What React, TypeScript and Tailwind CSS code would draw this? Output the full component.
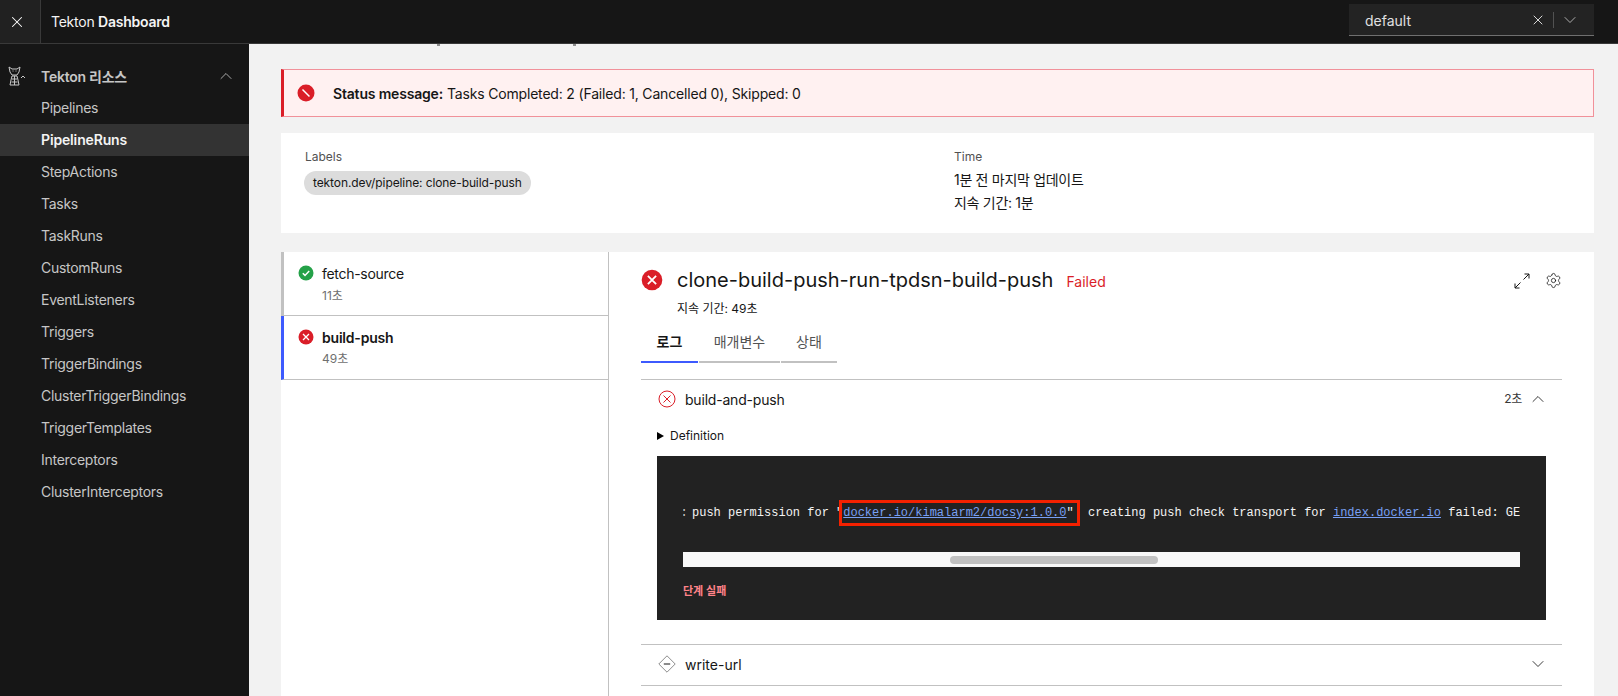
import React from 'react';
import { ChevronUp, ChevronDown, X, Settings } from 'lucide-react';

const sans = { fontFamily: '"Inter", "Noto Sans CJK KR", sans-serif' };

const navItems = [
  'Pipelines',
  'PipelineRuns',
  'StepActions',
  'Tasks',
  'TaskRuns',
  'CustomRuns',
  'EventListeners',
  'Triggers',
  'TriggerBindings',
  'ClusterTriggerBindings',
  'TriggerTemplates',
  'Interceptors',
  'ClusterInterceptors',
];

const FilledX = ({ size }: { size: number }) => (
  <svg width={size} height={size} viewBox="0 0 16 16" className="shrink-0">
    <circle cx="8" cy="8" r="7.5" fill="#da1e28" />
    <path d="M5 5l6 6M11 5l-6 6" stroke="#fff" strokeWidth="1.3" fill="none" />
  </svg>
);

const FilledCheck = () => (
  <svg width="16" height="16" viewBox="0 0 16 16" className="shrink-0">
    <circle cx="8" cy="8" r="7.5" fill="#24a148" />
    <path d="M4.8 8.2l2.2 2.2 4.2-4.4" stroke="#fff" strokeWidth="1.5" fill="none" />
  </svg>
);

const OutlineX = () => (
  <svg width="18" height="18" viewBox="0 0 18 18" className="shrink-0">
    <circle cx="9" cy="9" r="8" fill="none" stroke="#da1e28" strokeWidth="1" />
    <path d="M5.5 5.5l7 7M12.5 5.5l-7 7" stroke="#da1e28" strokeWidth="1" fill="none" />
  </svg>
);

const SkippedDiamond = () => (
  <svg width="18" height="18" viewBox="0 0 18 18" className="shrink-0">
    <path d="M9 .8L17.2 9 9 17.2.8 9z" fill="none" stroke="#8d8d8d" strokeWidth="1" />
    <path d="M5.8 9h6.4" stroke="#6f6f6f" strokeWidth="1.6" fill="none" />
  </svg>
);

const TektonLogo = () => (
  <svg width="18" height="20" viewBox="0 0 18 20" className="shrink-0" fill="none" stroke="#c6c6c6" strokeWidth="1">
    <path d="M1 1l3 2h5l3-2-1 5-2 3H4L2 6z" />
    <path d="M4.5 5h1M7.5 5h1" />
    <path d="M4 10h5l1 4 1 5H2l1-5z" />
    <path d="M4 13h5M3.5 16h6M6.5 10v9" />
    <path d="M13 12l2-2 2 2" />
  </svg>
);

const Sidebar = () => (
  <aside className="w-[249px] shrink-0 bg-[#161616] pt-[16px]">
    <div className="flex h-[32px] items-center">
      <div className="flex w-[41px] justify-start pl-[8px]">
        <TektonLogo />
      </div>
      <span className="flex-1 text-[14px] font-semibold tracking-[-0.25px] text-[#c6c6c6]">Tekton 리소스</span>
      <ChevronUp size={20} strokeWidth={1} className="mr-[13px] text-[#c6c6c6]" />
    </div>
    {navItems.map((item) => (
      <div
        key={item}
        className={
          item === 'PipelineRuns'
            ? 'flex h-[32px] items-center bg-[#333333] pb-px pl-[41px] text-[14px] font-semibold tracking-[-0.15px] text-[#f4f4f4]'
            : 'flex h-[32px] items-center pb-px pl-[41px] text-[14px] tracking-[-0.28px] text-[#c6c6c6]'
        }
      >
        {item}
      </div>
    ))}
  </aside>
);

const Header = () => (
  <header className="flex h-[44px] shrink-0 items-stretch border-b border-[#393939] bg-[#161616]">
    <div className="flex w-[41px] items-center justify-center border-r border-[#393939] bg-[#212121] pr-[7px] text-white">
      <X size={18} strokeWidth={1.4} />
    </div>
    <div className="flex flex-1 items-center pb-px pl-[10px] text-[14px] tracking-[-0.25px] text-[#f4f4f4]">
      Tekton&nbsp;<span className="font-semibold">Dashboard</span>
    </div>
    <div className="mr-[24px] mt-[4px] flex h-[32px] w-[245px] items-center border-b border-[#6f6f6f] bg-[#232323] text-[#e0e0e0]">
      <span className="flex-1 pl-[16px] pt-px text-[14px]">default</span>
      <X size={16} strokeWidth={1.3} className="mr-[7px] text-[#f4f4f4]" />
      <div className="h-[16px] w-px bg-[#525252]" />
      <ChevronDown size={20} strokeWidth={1} className="ml-[6px] mr-[14px] text-[#c6c6c6]" />
    </div>
  </header>
);

const StatusBanner = () => (
  <div className="flex h-[48px] items-center border border-l-[3px] border-[#f1919a] border-l-[#da1e28] bg-[#fff1f1] pl-[13px] text-[14px] tracking-[-0.18px] text-[#161616]">
    <svg width="18" height="18" viewBox="0 0 18 18" className="shrink-0">
      <circle cx="9" cy="9" r="8.5" fill="#da1e28" />
      <path d="M5.5 5.5l7 7" stroke="#fff" strokeWidth="1.5" fill="none" />
    </svg>
    <span className="ml-[18px] font-semibold">Status message:</span>
    <span className="ml-[4px]">Tasks Completed: 2 (Failed: 1, Cancelled 0), Skipped: 0</span>
  </div>
);

const InfoCard = () => (
  <div className="mt-[16px] flex h-[100px] bg-white pl-[24px] pt-[16px]">
    <div className="w-[649px]">
      <div className="text-[12px] leading-[16px] text-[#525252]">Labels</div>
      <div className="-ml-px mt-[6px] inline-flex h-[24px] items-center rounded-full bg-[#dcdcdc] px-[9px] text-[12px] tracking-[-0.1px] text-[#161616]">
        tekton.dev/pipeline: clone-build-push
      </div>
    </div>
    <div>
      <div className="text-[12px] leading-[16px] text-[#525252]">Time</div>
      <div className="mt-[3px] text-[14px] leading-[23px] tracking-[-0.3px] text-[#161616]">1분 전 마지막 업데이트</div>
      <div className="text-[14px] leading-[23px] tracking-[-0.3px] text-[#161616]">지속 기간: 1분</div>
    </div>
  </div>
);

const TaskList = () => (
  <div className="w-[328px] shrink-0 border-r border-[#c1c1c1]">
    <div className="h-[64px] border-b border-l-[3px] border-b-[#c1c1c1] border-l-[#c1c1c1] pl-[14px] pt-[13px]">
      <div className="flex h-[16px] items-center gap-[8px] text-[14px] tracking-[-0.3px] text-[#161616]">
        <FilledCheck />
        fetch-source
      </div>
      <div className="ml-[24px] mt-[7px] text-[12px] leading-[16px] text-[#6f6f6f]">11초</div>
    </div>
    <div className="h-[64px] border-b border-l-[3px] border-b-[#c1c1c1] border-l-[#3d5afe] pl-[14px] pt-[13px]">
      <div className="flex h-[16px] items-center gap-[8px] text-[14px] font-semibold tracking-[-0.2px] text-[#161616]">
        <FilledX size={16} />
        build-push
      </div>
      <div className="ml-[24px] mt-[6px] text-[12px] leading-[16px] text-[#6f6f6f]">49초</div>
    </div>
  </div>
);

const LogBox = () => (
  <div className="ml-[16px] mr-[16px] mt-[12px] h-[164px] bg-[#222222] pl-[26px] pr-[26px] pt-[44px]">
    <div className="h-[26px] overflow-hidden whitespace-pre py-[4px] text-[12px] leading-[18px] text-[#f4f4f4]" style={{ fontFamily: '"Liberation Mono", monospace' }}>
      <span className="relative left-[3px] -ml-[5.4px] text-[#c6c6c6]">:</span>
      {' push permission for "'}
      <span className="relative inline-block text-[#78a0f5] underline">
        docker.io/kimalarm2/docsy:1.0.0
        <span className="absolute -left-[4px] -top-[4px] h-[26px] w-[241px] border-[3px] border-[#f52100]" />
      </span>
      {'"  creating push check transport for '}
      <span className="text-[#78a0f5] underline">index.docker.io</span>
      {' failed: GE'}
    </div>
    <div className="mt-[26px] flex h-[15px] items-center bg-[#f8f8f8] pl-[267px]">
      <div className="h-[8px] w-[208px] rounded-full bg-[#c1c1c1]" />
    </div>
    <div className="mt-[16px] text-[11px] font-semibold leading-[16px] text-[#ff8389]">단계 실패</div>
  </div>
);

const TaskDetail = () => (
  <div className="flex-1 pl-[32px] pr-[33px]">
    <div className="flex items-start pt-[17px]">
      <div className="mr-[14px]">
        <FilledX size={22} />
      </div>
      <div className="flex-1">
        <div className="flex items-baseline">
          <span className="text-[20px] leading-[22px] text-[#161616]">clone-build-push-run-tpdsn-build-push</span>
          <span className="ml-[13px] text-[14px] text-[#da1e28]">Failed</span>
        </div>
        <div className="mt-[9px] text-[12px] leading-[16px] text-[#161616]">지속 기간: 49초</div>
      </div>
      <div className="flex items-center gap-[15px] pt-[3px]">
        <svg width="16" height="16" viewBox="0 0 16 16" fill="none" stroke="#161616" strokeWidth="1">
          <path d="M9.5 6.5L15 1M10.5 1H15v4.5M1 15l5.5-5.5M1 10.5V15h4.5" />
        </svg>
        <Settings size={17} strokeWidth={1.1} className="text-[#161616]" />
      </div>
    </div>
    <div className="mt-[8px] flex text-[14px] text-[#525252]">
      <div className="flex h-[38px] w-[57px] items-center justify-center border-b-2 border-[#3d5afe] pb-[3px] font-semibold text-[#161616]">로그</div>
      <div className="ml-px flex h-[38px] w-[81px] items-center justify-center border-b-2 border-[#c1c1c1] pb-[3px]">매개변수</div>
      <div className="ml-px flex h-[38px] w-[56px] items-center justify-center border-b-2 border-[#c1c1c1] pb-[3px]">상태</div>
    </div>
    <div className="mt-[16px] border-t border-[#c1c1c1]">
      <div className="flex h-[38px] items-center pl-[17px] text-[14px] tracking-[-0.2px] text-[#161616]">
        <OutlineX />
        <span className="ml-[9px] flex-1">build-and-push</span>
        <span className="text-[12px] text-[#393939]">2초</span>
        <ChevronUp size={20} strokeWidth={1} className="ml-[6px] mr-[14px] text-[#161616]" />
      </div>
      <div className="ml-[16px] mt-[10px] flex h-[16px] items-center text-[12px] text-[#161616]">
        <span className="mr-[6px] h-0 w-0 border-y-[4px] border-l-[7px] border-y-transparent border-l-black" />
        Definition
      </div>
      <LogBox />
    </div>
    <div className="mt-[24px] border-y border-[#c1c1c1]">
      <div className="flex h-[40px] items-center pb-[2px] pl-[17px] text-[14px] text-[#161616]">
        <SkippedDiamond />
        <span className="ml-[9px] flex-1">write-url</span>
        <ChevronDown size={20} strokeWidth={1} className="mr-[14px] text-[#161616]" />
      </div>
    </div>
  </div>
);

export default function App() {
  return (
    <div className="flex h-[696px] flex-col overflow-hidden bg-[#f2f2f2]" style={sans}>
      <Header />
      <div className="flex min-h-0 flex-1">
        <Sidebar />
        <main className="min-w-0 flex-1 overflow-hidden pl-[32px] pr-[24px]">
          <div className="mb-[23px] flex h-[2px] pl-[156px]">
            <div className="h-[2px] w-[3px] bg-[#8d8d8d]" />
            <div className="ml-[133px] h-[2px] w-[3px] bg-[#8d8d8d]" />
          </div>
          <StatusBanner />
          <InfoCard />
          <div className="mt-[19px] flex h-[500px] bg-white">
            <TaskList />
            <TaskDetail />
          </div>
        </main>
      </div>
    </div>
  );
}
